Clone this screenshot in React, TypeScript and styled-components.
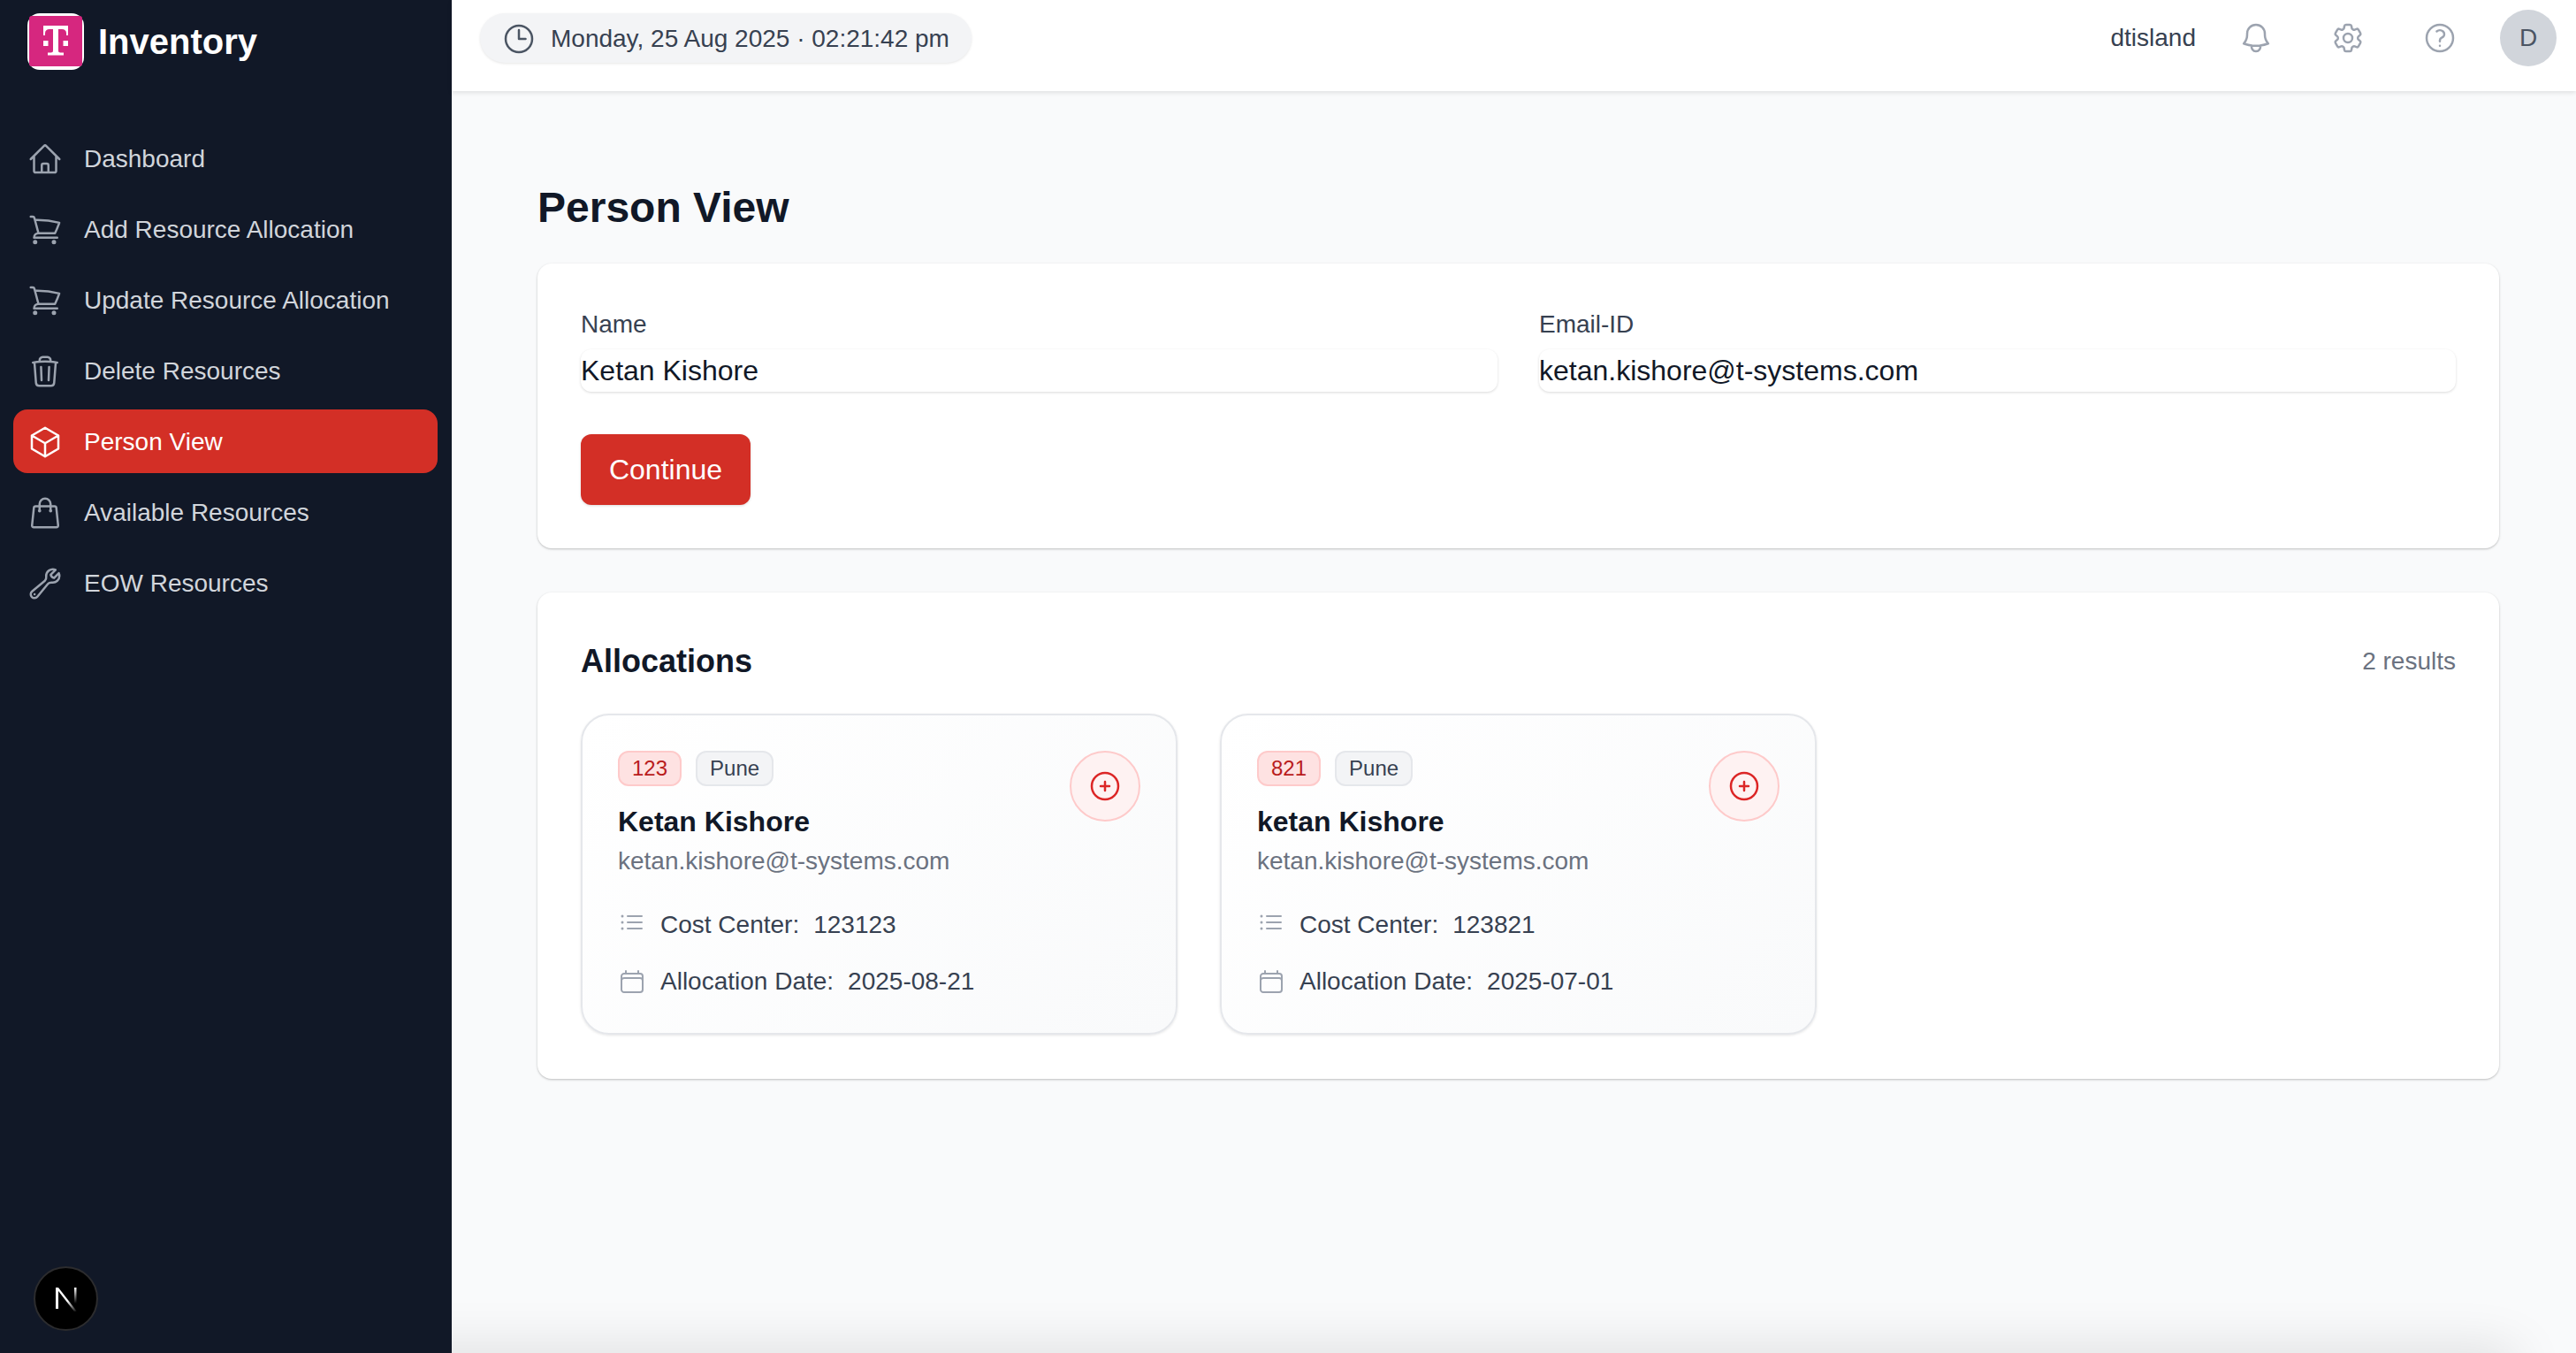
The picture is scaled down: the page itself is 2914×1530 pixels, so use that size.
import styled, { createGlobalStyle } from "styled-components";
import {
  HiOutlineBell,
  HiOutlineCalendar,
  HiOutlineClock,
  HiOutlineCog6Tooth,
  HiOutlineCube,
  HiOutlineHome,
  HiOutlineListBullet,
  HiOutlinePlusCircle,
  HiOutlineQuestionMarkCircle,
  HiOutlineShoppingBag,
  HiOutlineShoppingCart,
  HiOutlineTrash,
  HiOutlineWrench,
} from "react-icons/hi2";

const GlobalStyle = createGlobalStyle`
  * { box-sizing: border-box; }
  html, body { margin: 0; padding: 0; height: 100%; }
  body {
    font-family: "Liberation Sans", Arial, sans-serif;
    background: #f9fafb;
    overflow: hidden;
  }
`;

const Shell = styled.div`
  display: flex;
  width: 100%;
  height: 100vh;
`;

/* Sidebar */
const Sidebar = styled.aside`
  position: relative;
  flex: 0 0 511px;
  background: #111827;
  padding-top: 15px;
`;

const Brand = styled.div`
  display: flex;
  align-items: center;
  gap: 16px;
  padding-left: 31px;
  margin-bottom: 64px;
  color: #fff;
  font-size: 40px;
  font-weight: 700;
  line-height: 64px;
`;

const Nav = styled.nav`
  display: flex;
  flex-direction: column;
  gap: 8px;
  padding: 0 16px 0 15px;
`;

const NavItem = styled.a<{ $active?: boolean }>`
  display: flex;
  align-items: center;
  gap: 24px;
  height: 72px;
  padding-left: 16px;
  padding-top: 1px;
  border-radius: 16px;
  font-size: 28px;
  background: ${(p) => (p.$active ? "#d32f26" : "transparent")};
  color: ${(p) => (p.$active ? "#fff" : "#d1d5db")};
  svg {
    width: 40px;
    height: 40px;
    flex: none;
    color: ${(p) => (p.$active ? "#fff" : "#9ca3af")};
  }
`;

const DevBadge = styled.div`
  position: absolute;
  left: 38px;
  bottom: 25px;
  width: 73px;
  height: 73px;
  border-radius: 50%;
  background: #000;
  border: 2px solid #2c2c2e;
  display: flex;
  align-items: center;
  justify-content: center;
`;

/* Right side */
const Column = styled.div`
  flex: 1;
  min-width: 0;
  display: flex;
  flex-direction: column;
`;

const Header = styled.header`
  position: relative;
  z-index: 1;
  flex: 0 0 103px;
  display: flex;
  align-items: flex-start;
  justify-content: space-between;
  padding: 11px 22px 0 32px;
  background: #fff;
  box-shadow: 0 2px 5px rgba(0, 0, 0, 0.1);
`;

const DatePill = styled.div`
  display: flex;
  align-items: center;
  gap: 16px;
  height: 56px;
  margin-top: 4px;
  padding: 1px 25px 0 24px;
  border-radius: 28px;
  background: #f3f4f6;
  box-shadow: 0 1px 3px rgba(0, 0, 0, 0.1);
  color: #374151;
  font-size: 28px;
  svg {
    width: 40px;
    height: 40px;
    color: #4b5563;
  }
`;

const HeaderRight = styled.div`
  display: flex;
  align-items: center;
  gap: 32px;
  height: 64px;
  color: #374151;
  font-size: 28px;
`;

const IconButton = styled.button`
  display: flex;
  padding: 16px;
  border: 0;
  background: none;
  color: #9ca3af;
  svg {
    width: 40px;
    height: 40px;
  }
`;

const Avatar = styled.div`
  width: 64px;
  height: 64px;
  border-radius: 50%;
  background: #d1d5db;
  color: #4b5563;
  font-size: 28px;
  display: flex;
  align-items: center;
  justify-content: center;
`;

const Main = styled.main`
  position: relative;
  flex: 1;
  overflow: hidden;
  padding: 98px 87px 0 97px;
  &::after {
    content: "";
    position: absolute;
    left: -120px;
    right: 70px;
    top: 100%;
    height: 40px;
    box-shadow: 0 0 60px rgba(0, 0, 0, 0.15);
  }
`;

const Title = styled.h1`
  margin: 0 0 29px;
  color: #111827;
  font-size: 48px;
  font-weight: 700;
  line-height: 68px;
`;

const Panel = styled.section<{ $tail: number }>`
  background: #fff;
  border-radius: 16px;
  padding: 48px 49px ${(p) => p.$tail}px;
  margin-bottom: 50px;
  box-shadow: 0 1px 3px rgba(0, 0, 0, 0.17), 0 1px 2px rgba(0, 0, 0, 0.09);
`;

const FieldGrid = styled.div`
  display: grid;
  grid-template-columns: 1fr 1fr;
  gap: 47px;
  margin-bottom: 48px;
`;

const Field = styled.label`
  display: flex;
  flex-direction: column;
  gap: 8px;
  padding-top: 1px;
  color: #374151;
  font-size: 28px;
  line-height: 40px;
`;

const TextInput = styled.input`
  width: 100%;
  height: 48px;
  padding: 0;
  border: 0;
  outline: none;
  border-radius: 12px;
  background: #fff;
  color: #111827;
  font: inherit;
  font-size: 32px;
  box-shadow: 0 1px 3px rgba(0, 0, 0, 0.15);
`;

const PrimaryButton = styled.button`
  display: block;
  width: 192px;
  height: 80px;
  border: 0;
  border-radius: 12px;
  background: #d32f26;
  color: #fff;
  font: inherit;
  font-size: 32px;
  box-shadow: 0 1px 3px rgba(0, 0, 0, 0.14);
`;

const PanelHead = styled.div`
  display: flex;
  align-items: center;
  justify-content: space-between;
  margin-bottom: 29px;
  line-height: 60px;
`;

const PanelTitle = styled.h2`
  margin: 0;
  color: #111827;
  font-size: 36px;
  font-weight: 700;
`;

const Count = styled.span`
  color: #6b7280;
  font-size: 28px;
`;

const CardGrid = styled.div`
  display: grid;
  grid-template-columns: repeat(3, 1fr);
  gap: 48px;
`;

const Card = styled.article`
  position: relative;
  height: 363px;
  padding: 40px;
  border: 2px solid #e5e7eb;
  border-radius: 32px;
  background: linear-gradient(135deg, #fff, #f9fafb);
  box-shadow: 0 1px 3px rgba(0, 0, 0, 0.1);
`;

const Badges = styled.div`
  display: flex;
  gap: 16px;
  margin-bottom: 16px;
`;

const Badge = styled.span<{ $accent?: boolean }>`
  height: 40px;
  padding: 0 14px;
  border-radius: 12px;
  font-size: 24px;
  line-height: 36px;
  border: 2px solid ${(p) => (p.$accent ? "#fecaca" : "#e5e7eb")};
  background: ${(p) => (p.$accent ? "#fee2e2" : "#f3f4f6")};
  color: ${(p) => (p.$accent ? "#b91c1c" : "#374151")};
`;

const PersonName = styled.div`
  color: #111827;
  font-size: 32px;
  font-weight: 700;
  line-height: 48px;
`;

const Email = styled.div`
  margin-top: 1px;
  margin-bottom: 32px;
  color: #6b7280;
  font-size: 28px;
  line-height: 40px;
`;

const MetaRow = styled.div`
  display: flex;
  align-items: center;
  gap: 16px;
  height: 40px;
  margin-bottom: 24px;
  color: #374151;
  font-size: 28px;
  svg {
    width: 32px;
    height: 32px;
    flex: none;
    color: #9ca3af;
  }
`;

const ListIcon = styled(HiOutlineListBullet)`
  margin-top: -6px;
`;

const AddButton = styled.button`
  position: absolute;
  top: 40px;
  right: 40px;
  width: 80px;
  height: 80px;
  padding: 0;
  border: 2px solid #fecaca;
  border-radius: 50%;
  background: #fef2f2;
  color: #dc2626;
  display: flex;
  align-items: center;
  justify-content: center;
  svg {
    width: 40px;
    height: 40px;
  }
`;

const navItems = [
  { label: "Dashboard", icon: HiOutlineHome },
  { label: "Add Resource Allocation", icon: HiOutlineShoppingCart },
  { label: "Update Resource Allocation", icon: HiOutlineShoppingCart },
  { label: "Delete Resources", icon: HiOutlineTrash },
  { label: "Person View", icon: HiOutlineCube, active: true },
  { label: "Available Resources", icon: HiOutlineShoppingBag },
  { label: "EOW Resources", icon: HiOutlineWrench },
];

const allocations = [
  { id: "123", name: "Ketan Kishore", cost: "123123", date: "2025-08-21" },
  { id: "821", name: "ketan Kishore", cost: "123821", date: "2025-07-01" },
];

function BrandLogo() {
  return (
    <svg width="64" height="64" viewBox="0 0 64 64">
      <rect width="64" height="64" rx="14" fill="#fff" />
      <rect x="2" y="3" width="60" height="57" rx="3" fill="#d6277f" />
      <path
        d="M18 14h28v11h-2v-2.500c0-3-2-4.500-5-4.500h-4v24c0 1.800.8 2.500 2.500 2.500H41v3H23v-3h3.500c1.700 0 2.500-.7 2.500-2.500V18h-4c-3 0-5 1.500-5 4.500V25h-2z"
        fill="#fff"
      />
      <rect x="18" y="31" width="5.500" height="6" fill="#fff" />
      <rect x="40.500" y="31" width="5.500" height="6" fill="#fff" />
    </svg>
  );
}

function NextMark() {
  return (
    <svg width="30" height="30" viewBox="0 0 30 30">
      <defs>
        <linearGradient id="nDiag" x1="0" y1="0" x2="1" y2="1">
          <stop offset="0.55" stopColor="#fff" />
          <stop offset="1" stopColor="#fff" stopOpacity="0" />
        </linearGradient>
        <linearGradient id="nStem" x1="0" y1="0" x2="0" y2="1">
          <stop offset="0" stopColor="#fff" />
          <stop offset="1" stopColor="#fff" stopOpacity="0" />
        </linearGradient>
      </defs>
      <rect x="3" y="2" width="3" height="24" fill="#fff" />
      <path d="M3 2h3l21 27h-3z" fill="url(#nDiag)" />
      <rect x="24" y="2" width="2.500" height="18" fill="url(#nStem)" />
    </svg>
  );
}

export default function App() {
  return (
    <Shell>
      <GlobalStyle />
      <Sidebar>
        <Brand>
          <BrandLogo />
          Inventory
        </Brand>
        <Nav>
          {navItems.map((item) => (
            <NavItem key={item.label} $active={item.active}>
              <item.icon />
              {item.label}
            </NavItem>
          ))}
        </Nav>
        <DevBadge>
          <NextMark />
        </DevBadge>
      </Sidebar>

      <Column>
        <Header>
          <DatePill>
            <HiOutlineClock />
            Monday, 25 Aug 2025 · 02:21:42 pm
          </DatePill>
          <HeaderRight>
            dtisland
            <IconButton><HiOutlineBell /></IconButton>
            <IconButton><HiOutlineCog6Tooth /></IconButton>
            <IconButton><HiOutlineQuestionMarkCircle /></IconButton>
            <Avatar>D</Avatar>
          </HeaderRight>
        </Header>

        <Main>
          <Title>Person View</Title>

          <Panel $tail={49}>
            <FieldGrid>
              <Field>
                Name
                <TextInput value="Ketan Kishore" readOnly />
              </Field>
              <Field>
                Email-ID
                <TextInput value="ketan.kishore@t-systems.com" readOnly />
              </Field>
            </FieldGrid>
            <PrimaryButton>Continue</PrimaryButton>
          </Panel>

          <Panel $tail={50}>
            <PanelHead>
              <PanelTitle>Allocations</PanelTitle>
              <Count>2 results</Count>
            </PanelHead>
            <CardGrid>
              {allocations.map((a) => (
                <Card key={a.id}>
                  <Badges>
                    <Badge $accent>{a.id}</Badge>
                    <Badge>Pune</Badge>
                  </Badges>
                  <PersonName>{a.name}</PersonName>
                  <Email>ketan.kishore@t-systems.com</Email>
                  <MetaRow>
                    <ListIcon />
                    Cost Center:
                    <span>{a.cost}</span>
                  </MetaRow>
                  <MetaRow>
                    <HiOutlineCalendar />
                    Allocation Date:
                    <span>{a.date}</span>
                  </MetaRow>
                  <AddButton><HiOutlinePlusCircle /></AddButton>
                </Card>
              ))}
            </CardGrid>
          </Panel>
        </Main>
      </Column>
    </Shell>
  );
}
